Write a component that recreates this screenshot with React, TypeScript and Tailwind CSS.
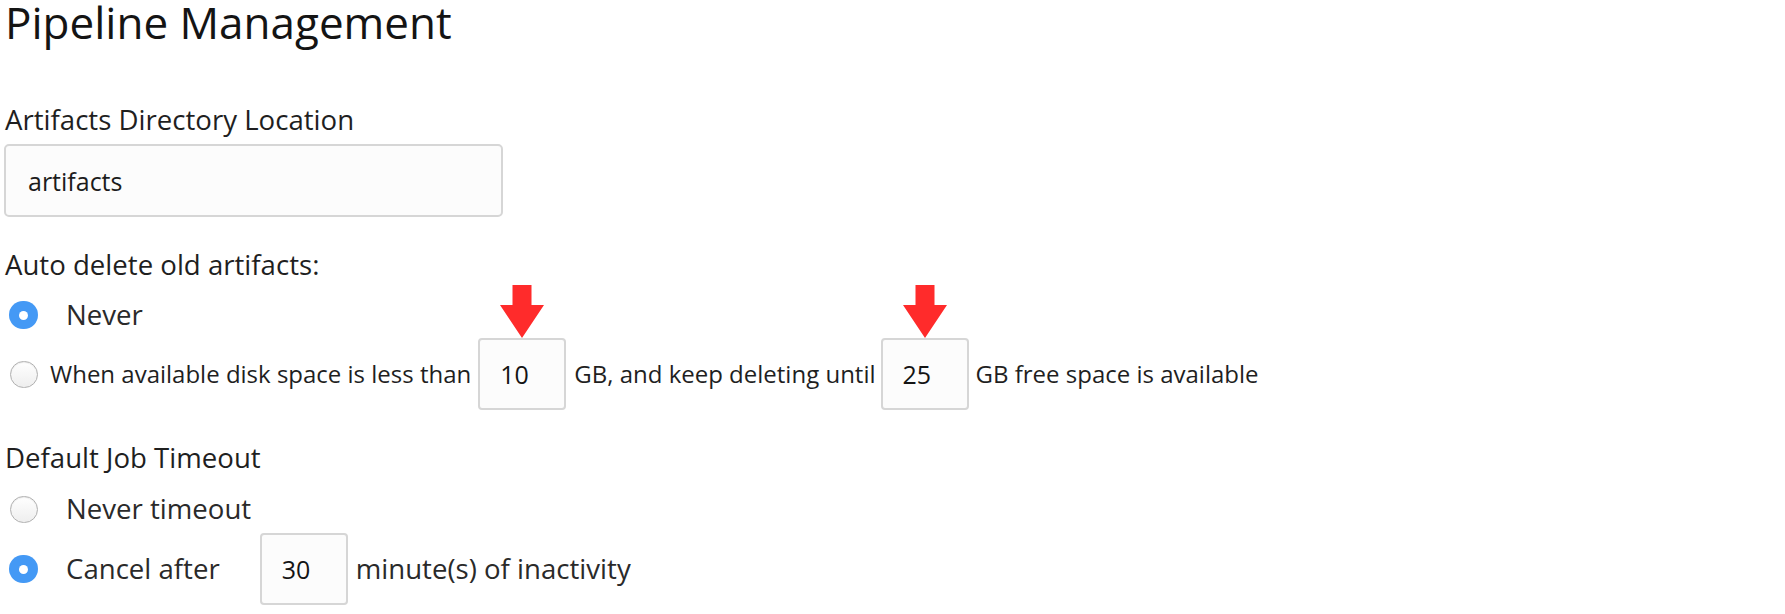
import { useState } from "react";

function Radio({ checked, onClick }: { checked: boolean; onClick?: () => void }) {
  return (
    <button
      type="button"
      onClick={onClick}
      className={
        checked
          ? "flex h-[28px] w-[29px] shrink-0 items-center justify-center rounded-full bg-[#4499f5]"
          : "h-[27px] w-[28px] shrink-0 rounded-full border-[1.5px] border-[#b0b0b0] bg-gradient-to-b from-white to-[#eeeeee] shadow-[inset_0_1px_1px_rgba(0,0,0,0.08)]"
      }
    >
      {checked && <span className="h-[9px] w-[9px] rounded-full bg-white" />}
    </button>
  );
}

function Arrow() {
  return (
    <svg
      className="absolute bottom-full left-1/2 -translate-x-1/2"
      width="44"
      height="53"
      viewBox="0 0 44 53"
    >
      <path d="M12.5 0h19v20h12.5L22 53 0 20h12.5z" fill="#ff2b2b" />
    </svg>
  );
}

function NumBox({ value, arrow }: { value: string; arrow?: boolean }) {
  return (
    <div className="relative shrink-0">
      {arrow && <Arrow />}
      <input
        defaultValue={value}
        className="h-[72px] w-[88px] rounded-[4px] border-2 border-[#d6d6d6] bg-[#fcfcfc] pl-[20px] text-[25px] text-[#141414] outline-none"
      />
    </div>
  );
}

export default function App() {
  const [autoDelete, setAutoDelete] = useState<"never" | "disk">("never");
  const [timeout, setTimeoutOpt] = useState<"never" | "cancel">("cancel");

  return (
    <div className="min-h-screen bg-white pl-[5px] font-['Open_Sans',sans-serif] text-[#1f1f1f]">
      {/* Header */}
      <h1 className="text-[44px] leading-[44px] text-[#141414]">Pipeline Management</h1>

      {/* Artifacts dir */}
      <div className="mt-[56px] flex h-[40px] items-center text-[27.6px]">
        Artifacts Directory Location
      </div>
      <input
        defaultValue="artifacts"
        className="-ml-px mt-[4px] block h-[73px] w-[499px] rounded-[5px] border-2 border-[#d6d6d6] bg-[#fcfcfc] pl-[22px] text-[25px] text-[#1c1c1c] outline-none"
      />

      {/* Auto delete */}
      <div className="mt-[28px] flex h-[40px] items-center text-[27.6px]">
        Auto delete old artifacts:
      </div>
      <div className="mt-[10px] flex h-[40px] items-center pl-[4px]">
        <Radio checked={autoDelete === "never"} onClick={() => setAutoDelete("never")} />
        <span className="ml-[28px] text-[27.6px] text-[#2a2a2a]">Never</span>
      </div>
      <div className="mt-[3px] flex h-[72px] items-center pl-[5px] text-[24px]">
        <Radio checked={autoDelete === "disk"} onClick={() => setAutoDelete("disk")} />
        <span className="ml-[12px] mr-[7px]">When available disk space is less than</span>
        <NumBox value="10" arrow />
        <span className="ml-[8px] mr-[5px]">GB, and keep deleting until</span>
        <NumBox value="25" arrow />
        <span className="ml-[7px]">GB free space is available</span>
      </div>

      {/* Timeout */}
      <div className="mt-[28px] flex h-[40px] items-center text-[27.6px]">
        Default Job Timeout
      </div>
      <div className="mt-[11px] flex h-[40px] items-center pl-[5px]">
        <Radio checked={timeout === "never"} onClick={() => setTimeoutOpt("never")} />
        <span className="ml-[28px] text-[27.6px] text-[#2a2a2a]">Never timeout</span>
      </div>
      <div className="mt-[4px] flex h-[72px] items-center pl-[4px] text-[27.6px] text-[#2a2a2a]">
        <Radio checked={timeout === "cancel"} onClick={() => setTimeoutOpt("cancel")} />
        <span className="ml-[28px] mr-[40px]">Cancel after</span>
        <NumBox value="30" />
        <span className="ml-[8px]">minute(s) of inactivity</span>
      </div>
    </div>
  );
}
